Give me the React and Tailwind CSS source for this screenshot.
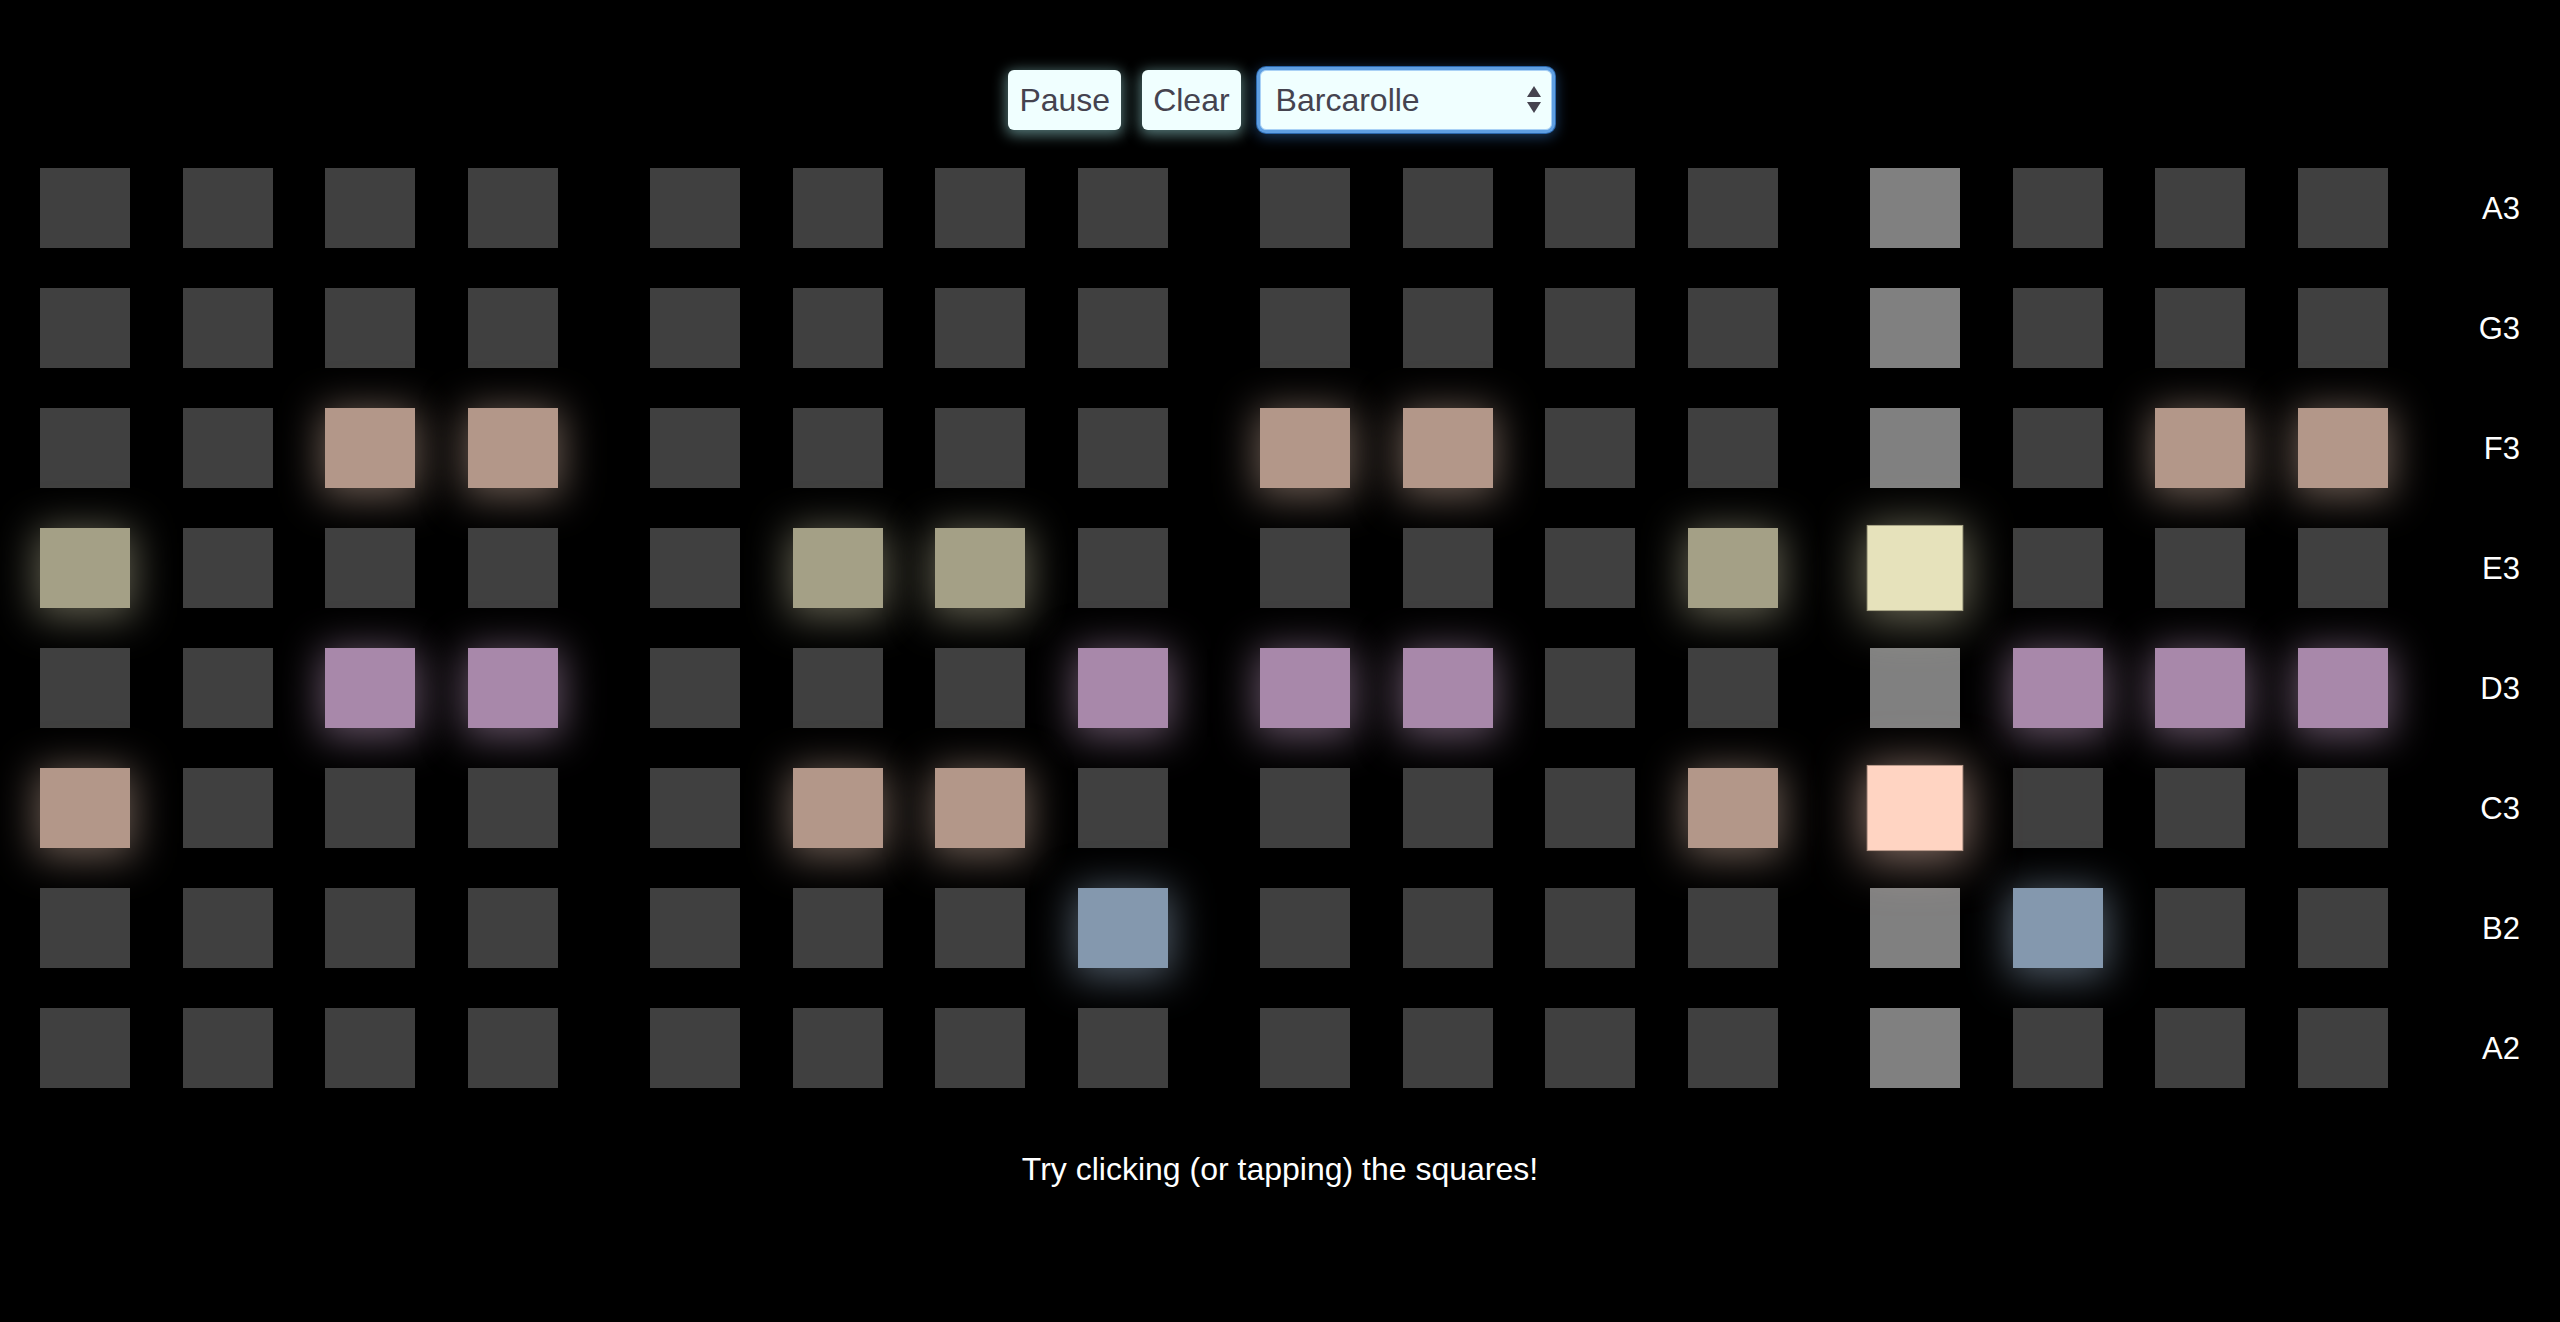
import React from 'react';

const NOTES = ['A3', 'G3', 'F3', 'E3', 'D3', 'C3', 'B2', 'A2'];
const PLAYING = 12;

// which steps are switched on for each note
const ACTIVE = {
    F3: [2, 3, 8, 9, 14, 15],
    E3: [0, 5, 6, 11, 12],
    D3: [2, 3, 7, 8, 9, 13, 14, 15],
    C3: [0, 5, 6, 11, 12],
    B2: [7, 13],
};

const TONE = {
    F3: { on: 'bg-[#b39789] shadow-[0_5px_40px_4px_rgba(179,151,137,0.6)]', hot: 'bg-[#ffd4c2] shadow-[0_5px_44px_6px_rgba(255,212,194,0.5)]' },
    C3: { on: 'bg-[#b39789] shadow-[0_5px_40px_4px_rgba(179,151,137,0.6)]', hot: 'bg-[#ffd4c2] scale-105 shadow-[0_5px_44px_6px_rgba(255,212,194,0.5)] ring-1 ring-[#b8998a]' },
    E3: { on: 'bg-[#a4a086] shadow-[0_5px_40px_4px_rgba(164,160,134,0.6)]', hot: 'bg-[#e6e2bb] scale-105 shadow-[0_5px_44px_6px_rgba(230,226,187,0.45)] ring-1 ring-[#a6a385]' },
    D3: { on: 'bg-[#a888aa] shadow-[0_5px_40px_4px_rgba(168,136,170,0.6)]', hot: 'bg-[#f0c2f3] shadow-[0_5px_44px_6px_rgba(240,194,243,0.5)]' },
    B2: { on: 'bg-[#8498ae] shadow-[0_5px_40px_4px_rgba(132,152,174,0.6)]', hot: 'bg-[#bdd8f4] shadow-[0_5px_44px_6px_rgba(189,216,244,0.5)]' },
};

const Square = ({ note, step }) => {
    const on = (ACTIVE[note] || []).includes(step);
    const playing = step === PLAYING;
    let cls = 'bg-[#404040]';
    if (on) cls = playing ? TONE[note].hot : TONE[note].on;
    else if (playing) cls = 'bg-[#808080]';
    return <div className={`w-[90px] h-[80px] shrink-0 ${cls}`} />;
};

const Row = ({ note }) => (
    <div className="flex items-center h-[80px] pl-[40px] pr-[40px]">
        <div className="flex gap-[92px]">
            {[0, 1, 2, 3].map((g) => (
                <div key={g} className="flex gap-[52.67px]">
                    {[0, 1, 2, 3].map((i) => (
                        <Square key={i} note={note} step={g * 4 + i} />
                    ))}
                </div>
            ))}
        </div>
        <div className="flex-1 text-right text-white text-[31px] leading-none">{note}</div>
    </div>
);

const btn = 'h-[60px] px-[11px] rounded-[6px] bg-[#f0ffff] text-[#45434f] text-[32px] shadow-[0_3px_14px_2px_rgba(170,240,240,0.5)]';

const App = () => {
    return (
        <div className="min-h-screen bg-black flex flex-col items-center pt-[70px] font-['Liberation_Sans',Arial,sans-serif]">
            <div className="flex items-center gap-[21px] h-[60px]">
                <button className={btn}>Pause</button>
                <button className={btn}>Clear</button>
                <div className="h-[60px] w-[292px] ml-[-2px] rounded-[6px] bg-[#f0ffff] border border-[#a9d1f6] flex items-center justify-between pl-[15px] pr-[10px] text-[#45434f] text-[32px] shadow-[0_0_0_3px_#5f9fe2,0_0_0_4px_#2b68ae,0_3px_14px_4px_rgba(60,130,210,0.45)]">
                    <span>Barcarolle</span>
                    <svg width="14" height="28" viewBox="0 0 14 28" className="fill-[#45434f]">
                        <polygon points="7,0 14,11 0,11" />
                        <polygon points="0,16 14,16 7,27" />
                    </svg>
                </div>
            </div>

            <div className="w-full mt-[38px] flex flex-col gap-[40px]">
                {NOTES.map((n) => (
                    <Row key={n} note={n} />
                ))}
            </div>

            <p className="mt-[57px] text-white text-[32px]">Try clicking (or tapping) the squares!</p>
        </div>
    );
};

export default App;
